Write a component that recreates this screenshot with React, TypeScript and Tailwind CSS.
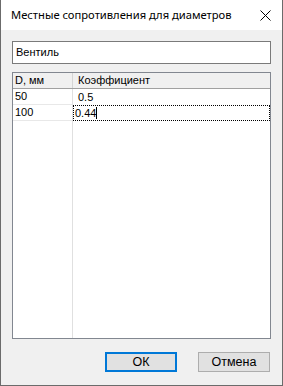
import React from 'react';

const rows = [
  { d: '50', k: '0.5' },
  { d: '100', k: '0.44' },
];

export default function App() {
  return (
    <div className="w-[283px] h-[386px] flex flex-col bg-[#f0f0f0] border-x border-b border-[#6b6b6b] font-['Liberation_Sans',Arial,sans-serif] text-[11px] text-black">
      {/* title bar */}
      <div className="h-[30px] bg-white flex items-center justify-between pl-[10px] pr-[11px]">
        <span className="font-['Noto_Sans',sans-serif] text-[11.2px] leading-none">Местные сопротивления для диаметров</span>
        <svg width="11" height="11" viewBox="0 0 11 11" className="mt-[1px]">
          <path d="M0.5 0.5 L10.5 10.5 M10.5 0.5 L0.5 10.5" stroke="#000" strokeWidth="1" />
        </svg>
      </div>

      <div className="flex-1 flex flex-col px-[11px] pt-[11px] pb-[13px]">
        <div className="h-[23px] bg-white border border-[#7a7a7a] flex items-center pl-[3px]">Вентиль</div>

        {/* grid */}
        <div className="mt-[8px] h-[267px] bg-white border border-[#828790] flex flex-col">
          <div className="h-[16px] flex bg-[#f0f0f0] border-b border-[#a0a0a0]">
            <div className="w-[60px] border-r border-[#d5d5d5] pl-[2px] flex items-center">D, мм</div>
            <div className="flex-1 pl-[5px] flex items-center">Коэффициент</div>
          </div>
          <div className="flex-1 flex">
            <div className="w-[60px] border-r border-[#e0e0e0] flex flex-col">
              {rows.map((r) => (
                <div key={r.d} className="h-[16px] border-b border-[#e8e8e8] pl-[2px] flex items-center">{r.d}</div>
              ))}
            </div>
            <div className="flex-1 flex flex-col">
              <div className="h-[16px] pl-[5px] flex items-center">0.5</div>
              <div className="h-[16px] border border-dotted border-black pl-[1px] flex items-center">
                <span>0.44</span>
                <span className="w-px h-[12px] bg-black" />
              </div>
            </div>
          </div>
        </div>

        {/* buttons */}
        <div className="mt-auto flex justify-end gap-[21px] pr-[1px] text-[12.5px]">
          <button className="w-[72px] h-[20px] bg-[#e1e1e1] border-2 border-[#0078d7] flex items-center justify-center">ОК</button>
          <button className="w-[72px] h-[20px] bg-[#e1e1e1] border border-[#adadad] flex items-center justify-center">Отмена</button>
        </div>
      </div>
    </div>
  );
}
